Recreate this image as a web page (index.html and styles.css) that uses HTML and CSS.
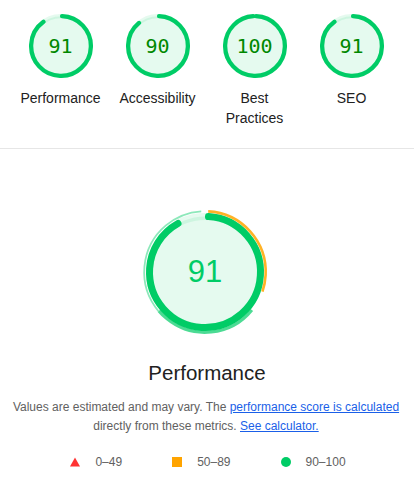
FILE: index.html
```html
<!DOCTYPE html>
<html lang="en">
<head>
<meta charset="utf-8">
<title>Lighthouse</title>
<link rel="stylesheet" href="styles.css">
</head>
<body>
<section class="scores">
  <div class="score">
    <div class="gauge">
      <svg class="gauge-svg" viewBox="0 0 120 120" width="64" height="64">
        <circle class="gauge-base" cx="60" cy="60" r="56" stroke-width="8"/>
        <circle class="gauge-arc" cx="60" cy="60" r="56" stroke-width="8" stroke-dasharray="314.2 351.9" transform="rotate(-87.95 60 60)"/>
      </svg>
      <span class="gauge-value">91</span>
    </div>
    <div class="score-label">Performance</div>
  </div>
  <div class="score">
    <div class="gauge">
      <svg class="gauge-svg" viewBox="0 0 120 120" width="64" height="64">
        <circle class="gauge-base" cx="60" cy="60" r="56" stroke-width="8"/>
        <circle class="gauge-arc" cx="60" cy="60" r="56" stroke-width="8" stroke-dasharray="310.7 351.9" transform="rotate(-87.95 60 60)"/>
      </svg>
      <span class="gauge-value">90</span>
    </div>
    <div class="score-label">Accessibility</div>
  </div>
  <div class="score">
    <div class="gauge">
      <svg class="gauge-svg" viewBox="0 0 120 120" width="64" height="64">
        <circle class="gauge-base" cx="60" cy="60" r="56" stroke-width="8"/>
        <circle class="gauge-arc" cx="60" cy="60" r="56" stroke-width="8" stroke-dasharray="345.9 351.9" transform="rotate(-87.95 60 60)"/>
      </svg>
      <span class="gauge-value">100</span>
    </div>
    <div class="score-label">Best Practices</div>
  </div>
  <div class="score">
    <div class="gauge">
      <svg class="gauge-svg" viewBox="0 0 120 120" width="64" height="64">
        <circle class="gauge-base" cx="60" cy="60" r="56" stroke-width="8"/>
        <circle class="gauge-arc" cx="60" cy="60" r="56" stroke-width="8" stroke-dasharray="314.2 351.9" transform="rotate(-87.95 60 60)"/>
      </svg>
      <span class="gauge-value">91</span>
    </div>
    <div class="score-label">SEO</div>
  </div>
</section>

<section class="perf">
  <div class="big-gauge">
    <svg class="big-svg" viewBox="0 0 128 128" width="128" height="128">
      <circle class="big-base" cx="64" cy="64" r="55.5" stroke-width="7"/>
      <circle class="big-arc" cx="64" cy="64" r="55.5" stroke-width="7" stroke-dasharray="316.5 348.7" transform="rotate(-86.4 64 64)"/>
      <circle class="metric metric-avg" cx="64" cy="64" r="60.7" stroke-width="2.6" stroke-dasharray="112 381.4" transform="rotate(-87 64 64)"/>
      <circle class="metric metric-pass-solid" cx="64" cy="64" r="60.3" stroke-width="3.2" stroke-dasharray="106 378.9" transform="rotate(39 64 64)"/>
      <circle class="metric metric-pass-light" cx="64" cy="64" r="60.8" stroke-width="1.8" stroke-dasharray="134 382" transform="rotate(140 64 64)"/>
    </svg>
    <span class="big-value">91</span>
  </div>
  <h2 class="perf-title">Performance</h2>
  <p class="perf-note">Values are estimated and may vary. The <a href="#">performance score is calculated</a> directly from these metrics. <a href="#">See calculator.</a></p>
  <div class="legend">
    <div class="legend-item">
      <svg class="legend-icon" viewBox="0 0 10 10" width="10" height="10"><polygon points="5,0.5 10,9.5 0,9.5" fill="#ff3333"/></svg>
      <span>0–49</span>
    </div>
    <div class="legend-item">
      <span class="legend-square"></span>
      <span>50–89</span>
    </div>
    <div class="legend-item">
      <span class="legend-dot"></span>
      <span>90–100</span>
    </div>
  </div>
</section>
</body>
</html>
```
FILE: styles.css
```css
* { box-sizing: border-box; }
html, body { margin: 0; padding: 0; background: #fff; }
body {
  font-family: "Liberation Sans", Arial, Helvetica, sans-serif;
  color: #212121;
}

.scores {
  display: flex;
  justify-content: center;
  padding: 13.5px 2px 20px 0;
  border-bottom: 1px solid #e6e6e6;
}
.score {
  width: 97px;
  display: flex;
  flex-direction: column;
  align-items: center;
}
.gauge {
  display: grid;
  place-items: center;
  width: 64px;
  height: 64px;
}
.gauge > * { grid-area: 1 / 1; }
.gauge-svg { display: block; }
.gauge-base {
  fill: #00cc66;
  stroke: #00cc66;
  fill-opacity: 0.1;
  stroke-opacity: 0.1;
}
.gauge-arc {
  fill: none;
  stroke: #00cc66;
  stroke-linecap: round;
}
.gauge-value {
  font-family: "DejaVu Sans Mono", "Liberation Mono", monospace;
  font-size: 20px;
  line-height: 20px;
  color: #008800;
}
.score-label {
  width: 84px;
  margin-top: 11.5px;
  font-size: 14px;
  line-height: 19.5px;
  text-align: center;
  color: #212121;
}

.perf {
  display: flex;
  flex-direction: column;
  align-items: center;
  padding-top: 58.5px;
}
.big-gauge {
  display: grid;
  place-items: center;
  width: 128px;
  height: 128px;
  margin-right: 5px;
}
.big-gauge > * { grid-area: 1 / 1; }
.big-svg { display: block; }
.big-base {
  fill: #00cc66;
  stroke: #00cc66;
  fill-opacity: 0.1;
  stroke-opacity: 0.1;
}
.big-arc {
  fill: none;
  stroke: #00cc66;
  stroke-linecap: round;
}
.metric { fill: none; }
.metric-avg { stroke: #ffa400; stroke-opacity: 0.85; }
.metric-pass-solid { stroke: #00cc66; stroke-opacity: 0.7; }
.metric-pass-light { stroke: #00cc66; stroke-opacity: 0.45; }
.big-value {
  font-size: 31px;
  line-height: 32px;
  color: #00cc66;
  margin-left: 1px;
}
.perf-title {
  margin: 25px 0 0;
  font-size: 20.5px;
  line-height: 24px;
  font-weight: normal;
  color: #212121;
}
.perf-note {
  margin: 13px 0 0;
  padding: 0 10px 0 8px;
  font-size: 12px;
  line-height: 19.5px;
  text-align: center;
  color: #616161;
}
.perf-note a {
  color: #1a5fe8;
  text-decoration: underline;
}
.legend {
  display: flex;
  align-items: center;
  gap: 50px;
  margin: 17px 0 0 2px;
  font-size: 12px;
  line-height: 16px;
  color: #616161;
}
.legend-item {
  display: flex;
  align-items: center;
  gap: 15px;
}
.legend-icon { display: block; }
.legend-square {
  width: 10px;
  height: 10px;
  background: #ffa400;
}
.legend-dot {
  width: 10px;
  height: 10px;
  border-radius: 50%;
  background: #00cc66;
}
```
